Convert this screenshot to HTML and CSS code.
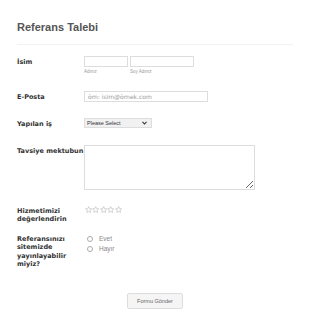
FILE: index.html
```html
<!DOCTYPE html>
<html lang="tr">
<head>
    <meta charset="UTF-8">
    <title>Referans Talebi</title>
    <link rel="stylesheet" href="styles.css">
</head>
<body>
    <div class="form">
        <h1 class="title">Referans Talebi</h1>
        <div class="row row-name">
            <label class="label">İsim</label>
            <div class="field">
                <div class="name-group">
                    <div class="name-part">
                        <input type="text" class="input first">
                        <span class="sublabel">Adınız</span>
                    </div>
                    <div class="name-part">
                        <input type="text" class="input last">
                        <span class="sublabel">Soy Adınız</span>
                    </div>
                </div>
            </div>
        </div>
        <div class="row">
            <label class="label">E-Posta</label>
            <div class="field">
                <input type="text" class="input email" placeholder="örn: isim@örnek.com">
            </div>
        </div>
        <div class="row">
            <label class="label">Yapılan iş</label>
            <div class="field">
                <div class="select-wrap">
                    <select class="select">
                        <option>Please Select</option>
                    </select>
                    <svg class="arrow" width="5" height="4" viewBox="0 0 5 4"><path d="M0.5 0.8 L2.5 3 L4.5 0.8" fill="none" stroke="#333" stroke-width="1.1"/></svg>
                </div>
            </div>
        </div>
        <div class="row">
            <label class="label">Tavsiye mektubun</label>
            <div class="field">
                <textarea class="textarea"></textarea>
            </div>
        </div>
        <div class="row row-rating">
            <label class="label">Hizmetimizi değerlendirin</label>
            <div class="field stars">
                <svg class="star" viewBox="0 0 24 24"><path d="M12 2 L14.9 8.6 L22 9.3 L16.6 14 L18.2 21 L12 17.3 L5.8 21 L7.4 14 L2 9.3 L9.1 8.6 Z"/></svg>
                <svg class="star" viewBox="0 0 24 24"><path d="M12 2 L14.9 8.6 L22 9.3 L16.6 14 L18.2 21 L12 17.3 L5.8 21 L7.4 14 L2 9.3 L9.1 8.6 Z"/></svg>
                <svg class="star" viewBox="0 0 24 24"><path d="M12 2 L14.9 8.6 L22 9.3 L16.6 14 L18.2 21 L12 17.3 L5.8 21 L7.4 14 L2 9.3 L9.1 8.6 Z"/></svg>
                <svg class="star" viewBox="0 0 24 24"><path d="M12 2 L14.9 8.6 L22 9.3 L16.6 14 L18.2 21 L12 17.3 L5.8 21 L7.4 14 L2 9.3 L9.1 8.6 Z"/></svg>
                <svg class="star" viewBox="0 0 24 24"><path d="M12 2 L14.9 8.6 L22 9.3 L16.6 14 L18.2 21 L12 17.3 L5.8 21 L7.4 14 L2 9.3 L9.1 8.6 Z"/></svg>
            </div>
        </div>
        <div class="row row-radio">
            <label class="label">Referansınızı sitemizde yayınlayabilir miyiz?</label>
            <div class="field radios">
                <div class="radio"><span class="circle"></span>Evet</div>
                <div class="radio"><span class="circle"></span>Hayır</div>
            </div>
        </div>
        <div class="submit-row">
            <button class="submit">Formu Gönder</button>
        </div>
    </div>
</body>
</html>
```

FILE: styles.css
```css
body {
    margin: 0;
    background: #fff;
    font-family: "DejaVu Sans", Verdana, sans-serif;
    color: #333;
}
.form {
    padding: 0 17px;
}
.title {
    margin: 0;
    padding: 21px 0 10px;
    font-family: "Liberation Sans", Arial, sans-serif;
    font-size: 11px;
    line-height: 13px;
    font-weight: bold;
    color: #555;
    border-bottom: 1px solid #f2f2f2;
}
.row {
    display: flex;
    margin-top: 16px;
}
.row-name {
    margin-top: 11px;
}
.row-rating {
    margin-top: 17px;
}
.row-radio {
    margin-top: 11px;
}
.label {
    width: 67px;
    flex: none;
    font-size: 6.5px;
    font-weight: bold;
    line-height: 8.5px;
    padding-top: 2px;
    color: #333;
}
.row-rating .label,
.row-radio .label {
    padding-top: 0;
}
.field {
    font-size: 0;
}
.name-group {
    display: flex;
    gap: 2px;
}
.name-part {
    display: flex;
    flex-direction: column;
}
.input {
    display: block;
    box-sizing: border-box;
    height: 11px;
    margin: 0;
    border: 1px solid #ddd;
    padding: 0 3px;
    font-family: "DejaVu Sans", Verdana, sans-serif;
    font-size: 6px;
}
.input::placeholder {
    color: #999;
}
.first {
    width: 44px;
}
.last {
    width: 64px;
}
.email {
    width: 124px;
}
.sublabel {
    font-family: "Liberation Sans", Arial, sans-serif;
    font-size: 4.5px;
    line-height: 6px;
    color: #999;
    margin-top: 2px;
}
.select-wrap {
    position: relative;
    width: 68px;
    height: 10px;
}
.select {
    display: block;
    -webkit-appearance: none;
    appearance: none;
    box-sizing: border-box;
    width: 68px;
    height: 10px;
    margin: 0;
    padding: 0 2px;
    font-family: "Liberation Sans", Arial, sans-serif;
    font-size: 5.5px;
    color: #333;
    border: 1px solid #ddd;
    border-radius: 0;
    background: #f1f1f1;
}
.arrow {
    position: absolute;
    right: 5px;
    top: 3px;
}
.textarea {
    display: block;
    box-sizing: border-box;
    width: 171px;
    height: 45px;
    border: 1px solid #ddd;
    margin: 0;
    resize: vertical;
}
.stars {
    display: flex;
    padding-left: 1px;
    margin-top: -1px;
}
.star {
    width: 7.4px;
    height: 7.4px;
    fill: none;
    stroke: #aaa;
    stroke-width: 1.6;
}
.radios {
    margin-top: -1px;
    font-family: "Liberation Sans", Arial, sans-serif;
    font-size: 6.5px;
    color: #888;
}
.radio {
    display: flex;
    align-items: center;
    height: 10px;
    padding-left: 3px;
}
.circle {
    width: 4px;
    height: 4px;
    border: 1px solid #aaa;
    border-radius: 50%;
    margin-right: 6px;
}
.submit-row {
    display: flex;
    justify-content: center;
    padding: 24px 0 16px;
}
.submit {
    width: 56px;
    height: 16px;
    padding: 0;
    background: #f5f5f5;
    border: 1px solid #ddd;
    border-radius: 2px;
    font-family: "Liberation Sans", Arial, sans-serif;
    font-size: 5.5px;
    color: #666;
}
```
